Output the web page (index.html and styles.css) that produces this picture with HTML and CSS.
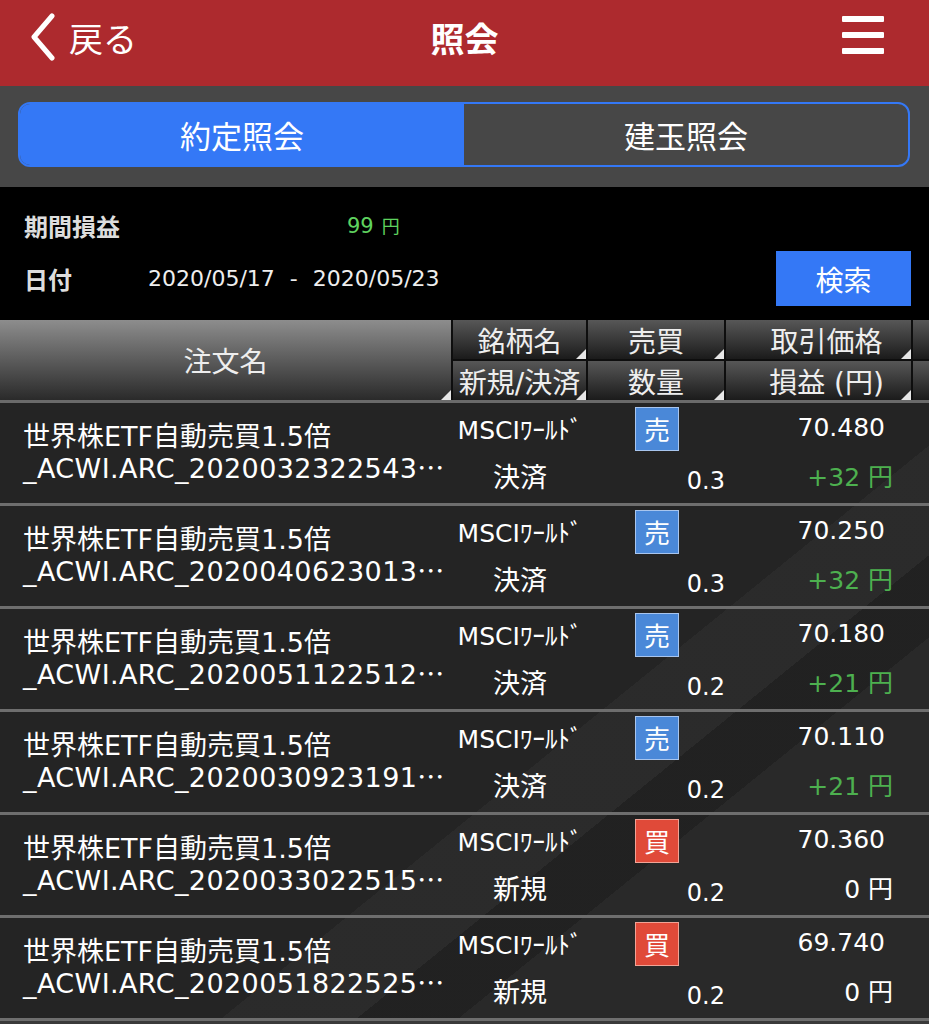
FILE: index.html
```html
<!doctype html>
<html lang="ja">
<head>
    <meta charset="UTF-8">
    <meta name="viewport"
          content="width=device-width, user-scalable=no, initial-scale=1.0, maximum-scale=1.0, minimum-scale=1.0">
    <title>照会</title>
    <link rel="stylesheet" href="styles.css">
</head>
<body>

<div id="header">
    <a class="back" href="javascript:;">
        <svg viewBox="0 0 28 48"><polyline points="23,3 5,24 23,45" fill="none" stroke="#fff" stroke-width="5" stroke-linecap="round" stroke-linejoin="round"/></svg>
        <span>戻る</span>
    </a>
    <h1 class="title">照会</h1>
    <a class="menu" href="javascript:;"><em></em><em></em><em></em></a>
</div>

<div id="tabs">
    <ul class="tab-box">
        <li class="active">約定照会</li>
        <li>建玉照会</li>
    </ul>
</div>

<div id="search">
    <dl class="search-row row-profit">
        <dt>期間損益</dt>
        <dd class="profit">99<span>円</span></dd>
    </dl>
    <dl class="search-row row-date">
        <dt>日付</dt>
        <dd class="date">2020/05/17<em>-</em>2020/05/23</dd>
        <a class="btn-search" href="javascript:;">検索</a>
    </dl>
</div>

<div id="list">
    <div class="list-head">
        <div class="h-name">注文名</div>
        <div>銘柄名</div>
        <div>売買</div>
        <div class="h-right">取引価格</div>
        <div class="h-none"></div>
        <div>新規/決済</div>
        <div>数量</div>
        <div class="h-right">損益 (円)</div>
        <div class="h-none"></div>
    </div>

    <ul class="list-body">
        <li>
            <div class="item-name"><span>世界株ETF自動売買1.5倍</span><span class="no">_ACWI.ARC_2020032322543<i class="dots">…</i></span></div>
            <div class="item-stock">MSCIﾜｰﾙﾄﾞ</div>
            <div class="item-side"><em class="sell">売</em></div>
            <div class="item-price">70.480</div>
            <div class="item-kind">決済</div>
            <div class="item-qty">0.3</div>
            <div class="item-pl plus">+32 円</div>
        </li>
        <li>
            <div class="item-name"><span>世界株ETF自動売買1.5倍</span><span class="no">_ACWI.ARC_2020040623013<i class="dots">…</i></span></div>
            <div class="item-stock">MSCIﾜｰﾙﾄﾞ</div>
            <div class="item-side"><em class="sell">売</em></div>
            <div class="item-price">70.250</div>
            <div class="item-kind">決済</div>
            <div class="item-qty">0.3</div>
            <div class="item-pl plus">+32 円</div>
        </li>
        <li>
            <div class="item-name"><span>世界株ETF自動売買1.5倍</span><span class="no">_ACWI.ARC_2020051122512<i class="dots">…</i></span></div>
            <div class="item-stock">MSCIﾜｰﾙﾄﾞ</div>
            <div class="item-side"><em class="sell">売</em></div>
            <div class="item-price">70.180</div>
            <div class="item-kind">決済</div>
            <div class="item-qty">0.2</div>
            <div class="item-pl plus">+21 円</div>
        </li>
        <li>
            <div class="item-name"><span>世界株ETF自動売買1.5倍</span><span class="no">_ACWI.ARC_2020030923191<i class="dots">…</i></span></div>
            <div class="item-stock">MSCIﾜｰﾙﾄﾞ</div>
            <div class="item-side"><em class="sell">売</em></div>
            <div class="item-price">70.110</div>
            <div class="item-kind">決済</div>
            <div class="item-qty">0.2</div>
            <div class="item-pl plus">+21 円</div>
        </li>
        <li>
            <div class="item-name"><span>世界株ETF自動売買1.5倍</span><span class="no">_ACWI.ARC_2020033022515<i class="dots">…</i></span></div>
            <div class="item-stock">MSCIﾜｰﾙﾄﾞ</div>
            <div class="item-side"><em class="buy">買</em></div>
            <div class="item-price">70.360</div>
            <div class="item-kind">新規</div>
            <div class="item-qty">0.2</div>
            <div class="item-pl">0 円</div>
        </li>
        <li>
            <div class="item-name"><span>世界株ETF自動売買1.5倍</span><span class="no">_ACWI.ARC_2020051822525<i class="dots">…</i></span></div>
            <div class="item-stock">MSCIﾜｰﾙﾄﾞ</div>
            <div class="item-side"><em class="buy">買</em></div>
            <div class="item-price">69.740</div>
            <div class="item-kind">新規</div>
            <div class="item-qty">0.2</div>
            <div class="item-pl">0 円</div>
        </li>
    </ul>
</div>

</body>
</html>
```

FILE: styles.css
```css
*{
    margin: 0;
    padding: 0;
}
a{
    color: #fff;
    text-decoration: none;
}
ul{
    list-style: none;
}
body,html{
    width: 100%;
    height: 100%;
    overflow: hidden;
}
body{
    background: #3a3a3a;
    color: #fff;
    font-family: "DejaVu Sans", "Noto Sans CJK JP", sans-serif;
}

/* 头部 */
#header{
    height: 86px;
    box-sizing: border-box;
    padding-bottom: 12px;
    background-color: #ad2a2e;
    display: grid;
    grid-template-columns: 1fr auto 1fr;
    align-items: center;
}
.back{
    margin-left: 29px;
    display: flex;
    align-items: center;
    font-size: 34px;
    font-family: "Noto Sans CJK JP", sans-serif;
}
.back svg{
    width: 28px;
    height: 48px;
    margin-right: 12px;
}
.title{
    font-size: 34px;
    font-weight: bold;
    font-family: "Noto Sans CJK JP", sans-serif;
}
.menu{
    justify-self: end;
    margin: 0 45px 4px 0;
    display: flex;
    flex-direction: column;
    gap: 10px;
}
.menu em{
    display: block;
    width: 42px;
    height: 6px;
    background: #fff;
    border-radius: 1px;
}

/* tab */
#tabs{
    background-color: #474747;
    padding: 16px 19px 20px 18px;
}
.tab-box{
    display: flex;
    height: 65px;
    box-sizing: border-box;
    border: 2px solid #3478f6;
    border-radius: 12px;
    overflow: hidden;
}
.tab-box li{
    flex: 1;
    display: flex;
    align-items: center;
    justify-content: center;
    font-size: 31px;
}
.tab-box li.active{
    background-color: #3478f6;
}

/* 検索 */
#search{
    background-color: #000;
    padding: 12px 18px 14px 24px;
}
.search-row{
    display: flex;
    align-items: center;
}
.row-profit{
    height: 52px;
}
.row-date{
    height: 55px;
}
.search-row dt{
    width: 124px;
    font-size: 24px;
    font-weight: bold;
    color: #ddd;
}
.search-row dd{
    flex: 1;
    font-size: 22px;
    color: #eee;
}
.search-row dd.profit{
    padding-left: 199px;
    font-size: 21px;
    color: #5fd35f;
}
.profit span{
    margin-left: 8px;
    font-size: 18px;
}
.date em{
    font-style: normal;
    margin: 0 15px;
}
.btn-search{
    width: 135px;
    height: 55px;
    background-color: #3478f6;
    display: flex;
    align-items: center;
    justify-content: center;
    font-size: 28px;
}

/* 一覧 */
.list-head{
    display: grid;
    grid-template-columns: 451px 133px 136px 185px 1fr;
    grid-template-rows: 39px 39px;
    gap: 2px;
    background-color: #0e0e0e;
    border-bottom: 3px solid #6a6a6a;
}
.list-head div{
    position: relative;
    display: flex;
    align-items: center;
    justify-content: center;
    font-size: 28px;
    color: #eee;
    white-space: nowrap;
    overflow: hidden;
    background: linear-gradient(#575757, #1b1b1b);
}
.list-head .h-name{
    grid-row: span 2;
    background: linear-gradient(#8d8d8d, #2a2a2a);
}
.list-head .h-right{
    padding-left: 16px;
}
.list-head div::after{
    content: '';
    position: absolute;
    right: 0;
    bottom: 0;
    border-left: 10px solid transparent;
    border-bottom: 10px solid #e6e6e6;
}
.list-head .h-none::after{
    display: none;
}

/* 背景の薄い斜線 */
.list-body{
    background-color: #242424;
    background-image: linear-gradient(141deg, transparent 58%, rgba(255,255,255,.03) 58%, rgba(255,255,255,.03) 66%, rgba(0,0,0,.07) 66%, rgba(0,0,0,.07) 72%, rgba(255,255,255,.025) 72%);
}
.list-body li{
    display: grid;
    grid-template-columns: 451px 138px 136px 1fr;
    grid-template-rows: 49px 51px;
    border-bottom: 3px solid #6e6e6e;
}
.list-body li div{
    display: flex;
    align-items: center;
    white-space: nowrap;
}
.list-body .item-name{
    grid-row: span 2;
    flex-direction: column;
    align-items: stretch;
    justify-content: center;
    padding: 0 0 0 23px;
    font-size: 27px;
    line-height: 30px;
    overflow: hidden;
}
.item-name span{
    display: block;
}
.item-name .no{
    letter-spacing: .4px;
}
.item-name .dots{
    font-style: normal;
    font-family: "Noto Sans CJK JP", sans-serif;
}
.list-body .item-stock{
    justify-content: center;
    font-size: 25px;
}
.list-body .item-side{
    justify-content: center;
    padding-top: 2px;
}
.item-side em{
    width: 44px;
    height: 44px;
    box-sizing: border-box;
    display: flex;
    align-items: center;
    justify-content: center;
    font-style: normal;
    font-size: 26px;
    font-family: "Noto Sans CJK JP", sans-serif;
}
.item-side em.sell{
    background-color: #4a88d8;
    border: 1px solid #a8c5ee;
}
.item-side em.buy{
    background-color: #e04a39;
    border: 1px solid #f1a396;
}
.list-body .item-price{
    justify-content: flex-end;
    padding-right: 44px;
    font-size: 25px;
}
.list-body .item-kind{
    justify-content: center;
    padding-bottom: 4px;
    font-size: 27px;
}
.list-body .item-qty{
    justify-content: flex-end;
    padding-top: 6px;
    font-size: 24px;
}
.list-body .item-pl{
    justify-content: flex-end;
    padding: 0 36px 6px 0;
    font-size: 25px;
}
.list-body .item-pl.plus{
    color: #4db04f;
}
```
